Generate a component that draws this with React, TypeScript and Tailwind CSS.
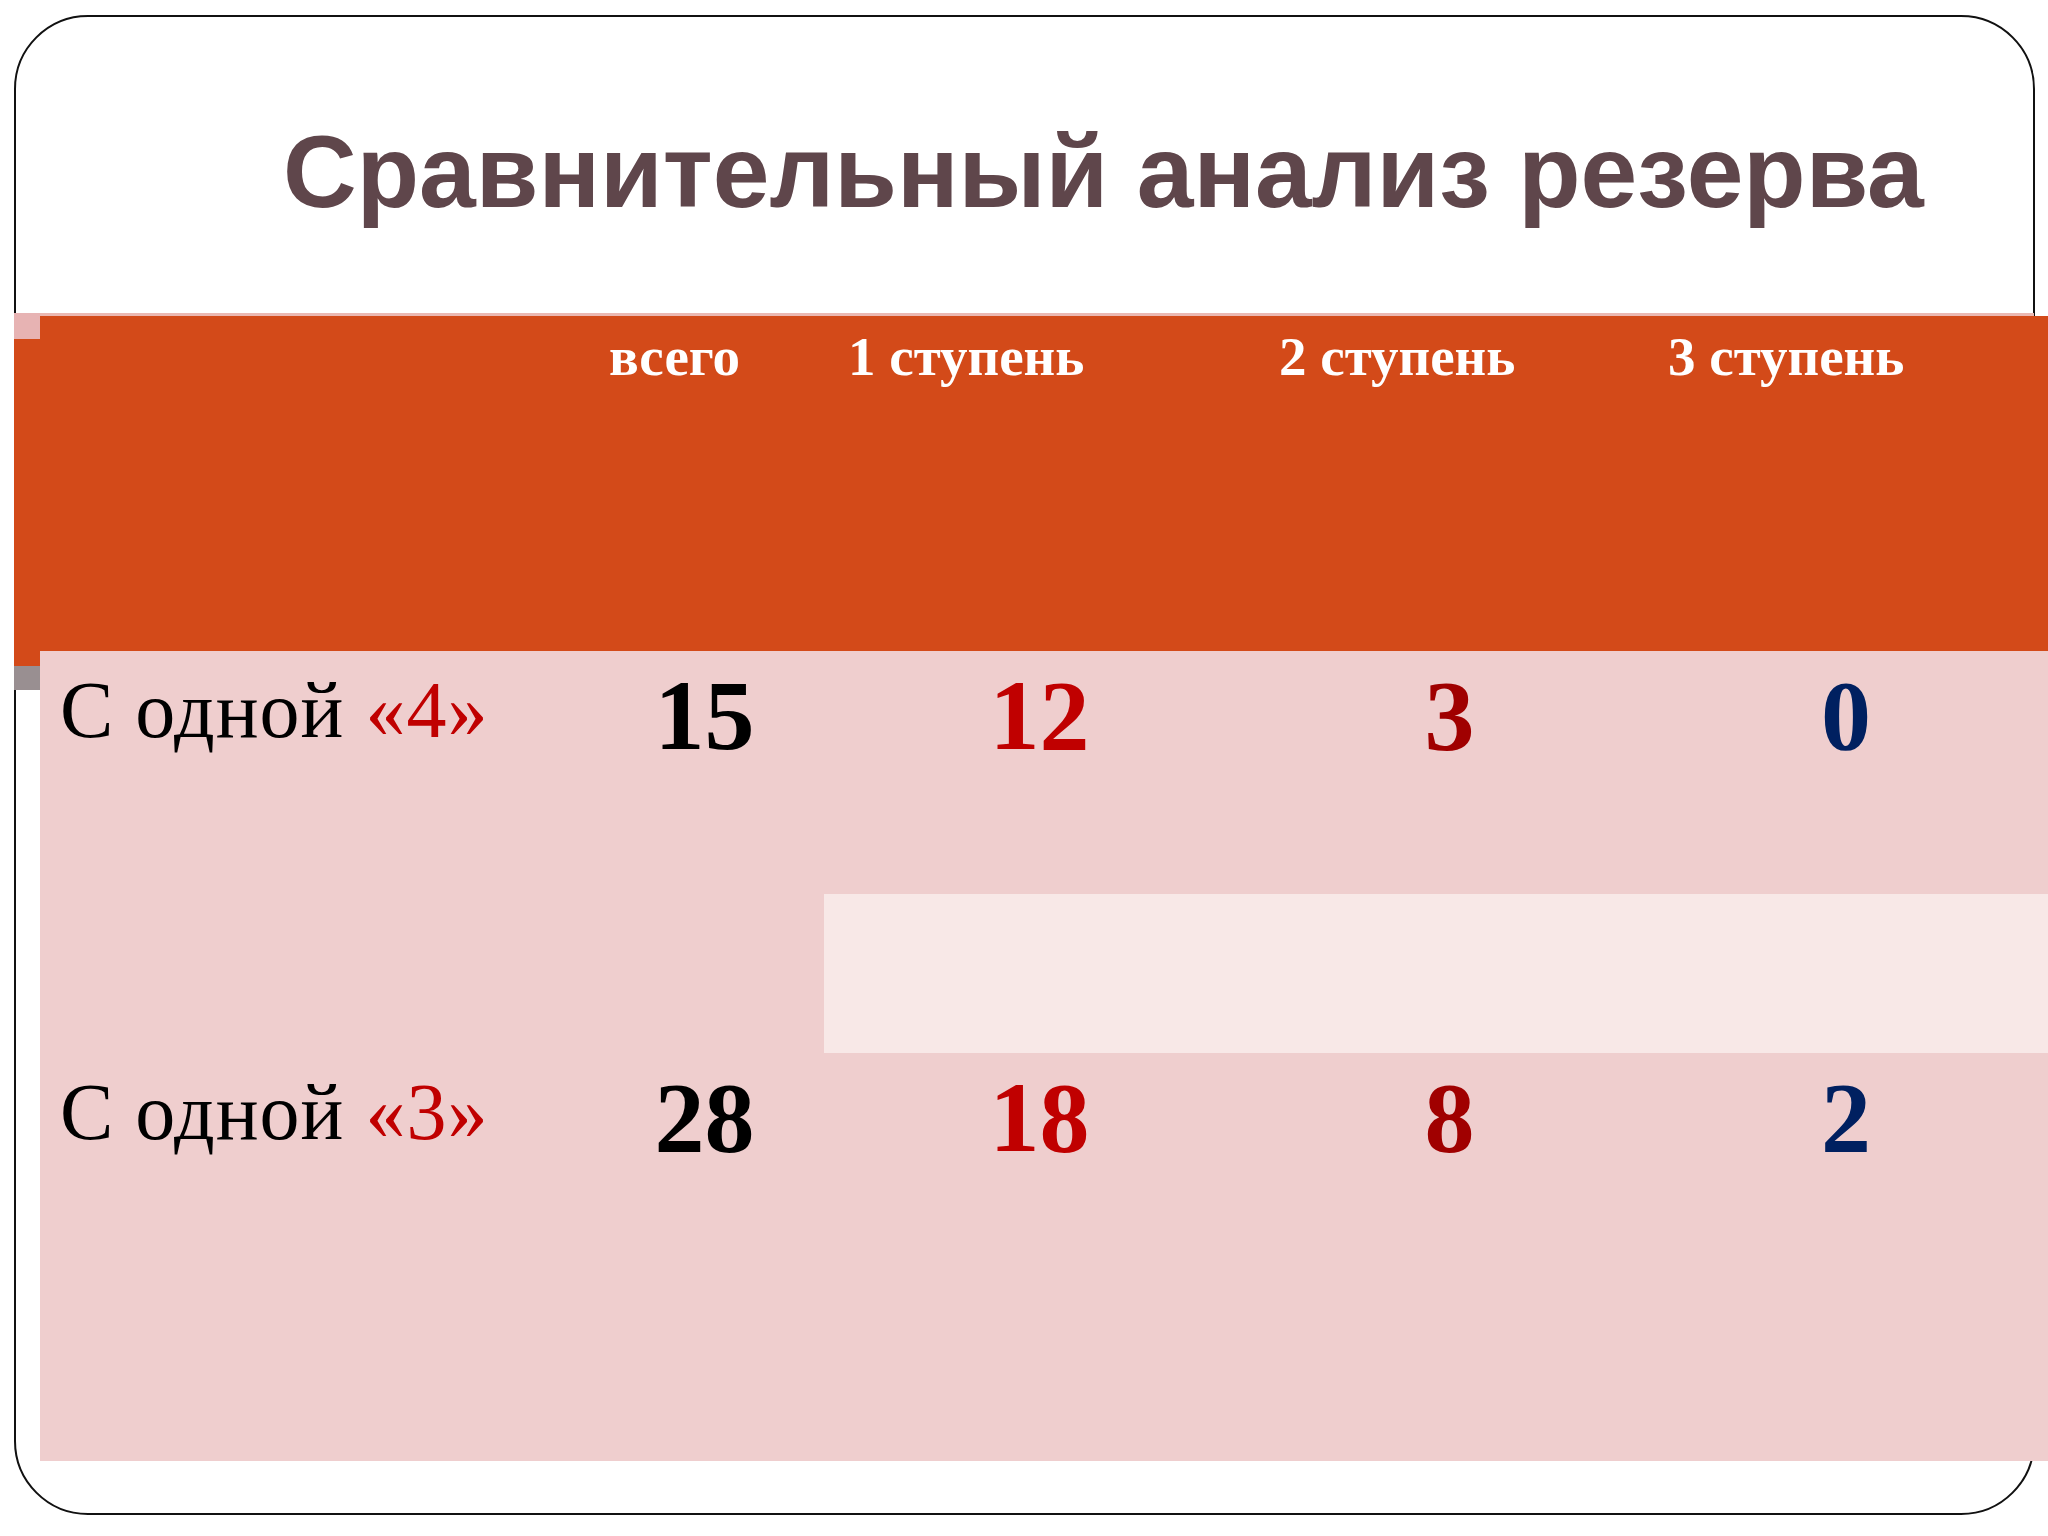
import React from 'react';

const cols = ['всего', '1 ступень', '2 ступень', '3 ступень'];

const rows = [
  { mark: '4', values: ['15', '12', '3', '0'] },
  { mark: '3', values: ['28', '18', '8', '2'] },
];

// colour of the numbers per column
const numColors = ['text-black', 'text-[#c00000]', 'text-[#a00000]', 'text-[#002060]'];

function Label({ mark }: { mark: string }) {
  return (
    <div className="pl-[20px] pt-[19px] text-[80px] leading-none tracking-[1px] text-black whitespace-nowrap font-['Liberation_Serif',serif]">
      С одной <span className="text-[#c00000]">«{mark}»</span>
    </div>
  );
}

function Num({ value, idx }: { value: string; idx: number }) {
  return (
    <div
      className={`pt-[15px] text-center text-[100px] leading-none font-bold font-['Liberation_Serif',serif] ${numColors[idx]}`}
    >
      {value}
    </div>
  );
}

export default function App() {
  return (
    <div className="relative w-[2048px] h-[1536px] bg-white overflow-hidden">
      {/* slide frame */}
      <div className="absolute left-[14px] top-[15px] w-[2021px] h-[1500px] rounded-[74px] border-[2px] border-[#111]" />

      <div className="relative">
        {/* Title */}
        <div className="h-[313px] pt-[121px] pl-[283px]">
          <h1 className="text-[102px] leading-none font-bold text-[#5f464b] whitespace-nowrap font-['Liberation_Sans',Arial,sans-serif]">
            Сравнительный анализ резерва
          </h1>
        </div>

        <div className="flex pl-[14px]">
          {/* theme side strip */}
          <div className="w-[26px] flex flex-col shrink-0">
            <div className="h-[26px] bg-[#e7b3b3]" />
            <div className="h-[327px] bg-[#d34a19]" />
            <div className="h-[24px] bg-[#998f91]" />
          </div>

          <div className="flex flex-col">
            <div className="h-[3px] w-[1994px] bg-[#ebb8b2]" />

            {/* Table */}
            <div className="grid grid-cols-[545px_239px_431px_389px_404px] grid-rows-[335px_243px_159px_408px]">
              {/* header row */}
              <div className="bg-[#d34a19]" />
              {cols.map((c) => (
                <div
                  key={c}
                  className="bg-[#d34a19] pl-[24px] pt-[13px] text-[55px] leading-none font-bold text-white whitespace-nowrap font-['Liberation_Serif',serif]"
                >
                  {c}
                </div>
              ))}

              {/* row 1 */}
              <div className="bg-[#efcece]">
                <Label mark={rows[0].mark} />
              </div>
              {rows[0].values.map((v, i) => (
                <div key={i} className="bg-[#efcece]">
                  <Num value={v} idx={i} />
                </div>
              ))}

              {/* empty banded row */}
              <div className="bg-[#efcece]" />
              <div className="bg-[#efcece]" />
              <div className="col-span-3 bg-[#f8e8e7]" />

              {/* row 2 */}
              <div className="bg-[#efcece]">
                <Label mark={rows[1].mark} />
              </div>
              {rows[1].values.map((v, i) => (
                <div key={i} className="bg-[#efcece]">
                  <Num value={v} idx={i} />
                </div>
              ))}
            </div>
          </div>
        </div>
      </div>
    </div>
  );
}
